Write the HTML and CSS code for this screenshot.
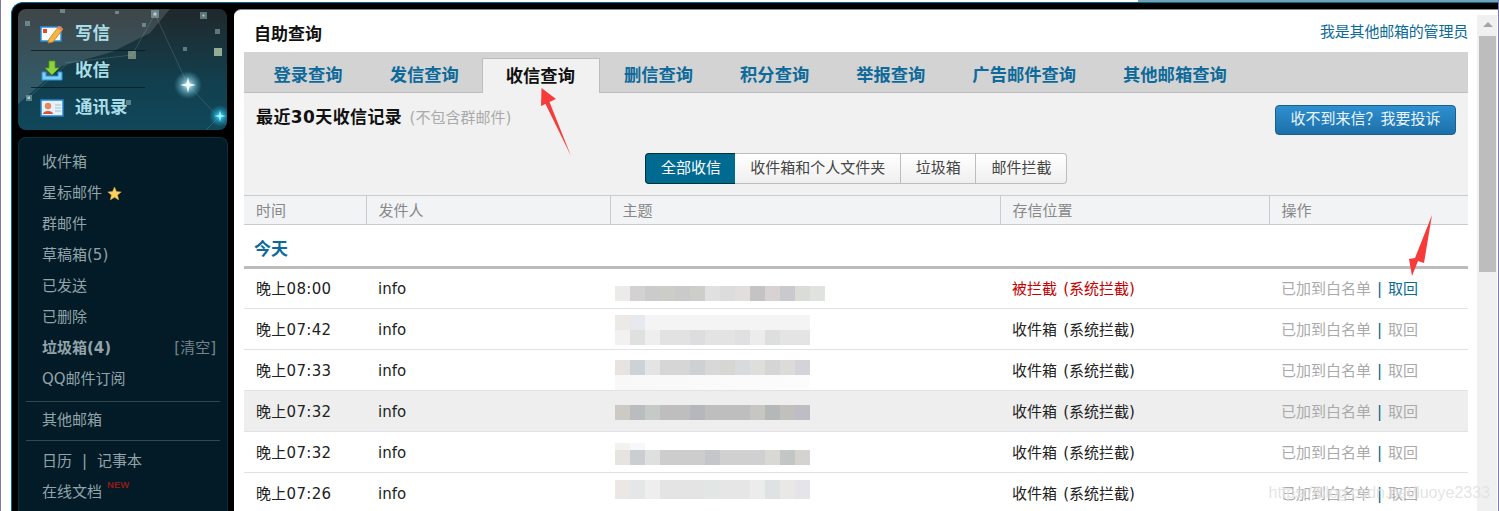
FILE: index.html
```html
<!DOCTYPE html>
<html lang="zh-CN">
<head>
<meta charset="utf-8">
<title>自助查询</title>
<link rel="stylesheet" href="styles.css">
</head>
<body>
<div class="topstrip"></div>
<div class="shell">
  <aside class="sidebar">
    <div class="compose">
      <svg class="sky" viewBox="18 9 209 121" aria-hidden="true">
        <defs>
          <radialGradient id="glowA"><stop offset="0" stop-color="#e8fbff"/><stop offset=".4" stop-color="#9fe0ee" stop-opacity=".6"/><stop offset="1" stop-color="#5cc4dc" stop-opacity="0"/></radialGradient>
          <radialGradient id="glowB"><stop offset="0" stop-color="#7ff0ff"/><stop offset=".35" stop-color="#27c4ea" stop-opacity=".7"/><stop offset="1" stop-color="#1a9cc4" stop-opacity="0"/></radialGradient>
          <filter id="soft"><feGaussianBlur stdDeviation=".6"/></filter>
        </defs>
        <polygon points="18,9 170,9 150,33 112,52 62,66 18,104" fill="#fff" opacity=".14"/>
        <g stroke="#9fd0da" stroke-width=".6" opacity=".32" fill="none">
          <path d="M155 14 L132 55 L65 63"/>
          <path d="M155 14 L188 85 L226 125"/>
          <path d="M66 65 L29 97"/>
          <path d="M220 116 L205 131"/>
        </g>
        <g fill="#9cc2c8" opacity=".5" filter="url(#soft)">
          <rect x="151" y="10" width="8" height="8"/>
          <rect x="200" y="12" width="7" height="7"/>
          <rect x="215" y="29" width="5" height="5"/>
          <rect x="115" y="11" width="4" height="3"/>
          <rect x="60" y="9" width="5" height="4"/>
          <rect x="25" y="21" width="5" height="5"/>
          <rect x="142" y="23" width="4" height="4"/>
          <rect x="183" y="47" width="4" height="4"/>
          <rect x="26" y="95" width="6" height="6"/>
          <rect x="126" y="100" width="5" height="5"/>
        </g>
        <g fill="#cfe6e8" opacity=".75">
          <rect x="153.5" y="12.5" width="3" height="3"/>
          <rect x="202.5" y="14.5" width="2" height="2"/>
          <rect x="27.5" y="96.5" width="2.5" height="2.5"/>
        </g>
        <rect x="128" y="51" width="8" height="8" fill="#b4c8a6" opacity=".55" filter="url(#soft)"/>
        <rect x="214" y="48" width="8" height="8" fill="#c6e0b8" opacity=".7" filter="url(#soft)"/>
        <circle cx="188" cy="85" r="14" fill="url(#glowA)"/>
        <path d="M188 77 L189.5 83.5 L196 85 L189.5 86.5 L188 93 L186.5 86.5 L180 85 L186.5 83.5Z" fill="#f1feff"/>
        <circle cx="220" cy="116" r="11" fill="url(#glowB)"/>
        <path d="M220 110 L221 115 L226 116 L221 117 L220 122 L219 117 L214 116 L219 115Z" fill="#a8f6ff"/>
        <path d="M31 50.5H145M31 87.5H145" stroke="#0a1a20" stroke-width="1" opacity=".8"/>
      </svg>
      <a class="compose-item">
        <svg class="nav-icon" viewBox="0 0 24 20" aria-hidden="true">
          <rect x="1" y="3" width="20" height="14" fill="#fff" stroke="#2b8fd6" stroke-width="1.5"/>
          <rect x="3" y="5" width="4" height="4" fill="#e8452c"/>
          <path d="M9 15 L19 2 L23 5 L13 18 L8 19 Z" fill="#f4b640" stroke="#c9762a" stroke-width=".8"/>
          <path d="M19 2 L23 5 L21.5 7 L17.5 4 Z" fill="#ef7f62"/>
        </svg>
        <span>写信</span>
      </a>
      <a class="compose-item">
        <svg class="nav-icon" viewBox="0 0 24 22" aria-hidden="true">
          <path d="M2 12V20H22V12H18V16H6V12Z" fill="#7fd0f4" stroke="#2593dc" stroke-width="1"/>
          <path d="M9 1H15V8H19L12 15L5 8H9Z" fill="#8ed23a" stroke="#4f9a1c" stroke-width=".8"/>
        </svg>
        <span>收信</span>
      </a>
      <a class="compose-item">
        <svg class="nav-icon" viewBox="0 0 24 18" aria-hidden="true">
          <rect x="1" y="1" width="22" height="16" fill="#e6f2fb" stroke="#2583d6" stroke-width="1.5"/>
          <circle cx="8" cy="7" r="3.2" fill="#e9875a"/>
          <path d="M3 15C3 11 13 11 13 15Z" fill="#d8553c"/>
          <path d="M15 6H21M15 9H21M15 12H21" stroke="#9fc0dc" stroke-width="1"/>
        </svg>
        <span>通讯录</span>
      </a>
    </div>
    <nav class="folders">
      <a class="folder">收件箱</a>
      <a class="folder">星标邮件
        <svg class="star" viewBox="0 0 16 16" aria-hidden="true"><path d="M8 1L10.1 5.8L15.2 6.3L11.3 9.7L12.5 14.8L8 12.1L3.5 14.8L4.7 9.7L.8 6.3L5.9 5.8Z" fill="#fbcf60" stroke="#d9a23a" stroke-width=".5"/></svg>
      </a>
      <a class="folder">群邮件</a>
      <a class="folder">草稿箱(5)</a>
      <a class="folder">已发送</a>
      <a class="folder">已删除</a>
      <a class="folder folder-split"><b>垃圾箱(4)</b><span class="clear">[清空]</span></a>
      <a class="folder">QQ邮件订阅</a>
      <hr class="rule rule-a">
      <a class="folder">其他邮箱</a>
      <hr class="rule rule-b">
      <div class="folder">日历<span class="pipe">|</span>记事本</div>
      <a class="folder">在线文档<sup class="new">NEW</sup></a>
    </nav>
  </aside>

  <main class="main">
    <div class="content">
      <header class="page-head">
        <h1>自助查询</h1>
        <a class="link">我是其他邮箱的管理员</a>
      </header>
      <div class="tabs">
        <a class="tab">登录查询</a>
        <a class="tab">发信查询</a>
        <a class="tab active">收信查询</a>
        <a class="tab">删信查询</a>
        <a class="tab">积分查询</a>
        <a class="tab">举报查询</a>
        <a class="tab">广告邮件查询</a>
        <a class="tab">其他邮箱查询</a>
      </div>
      <section class="panel">
        <div class="panel-top">
          <h2>最近30天收信记录 <small>(不包含群邮件)</small></h2>
          <button class="complain">收不到来信？我要投诉</button>
        </div>
        <div class="segments">
          <a class="seg on">全部收信</a>
          <a class="seg">收件箱和个人文件夹</a>
          <a class="seg">垃圾箱</a>
          <a class="seg">邮件拦截</a>
        </div>
      </section>
      <table class="records">
        <colgroup><col class="c1"><col class="c2"><col class="c3"><col class="c4"><col class="c5"></colgroup>
        <thead>
          <tr><th>时间</th><th>发件人</th><th>主题</th><th>存信位置</th><th>操作</th></tr>
        </thead>
        <tbody>
          <tr class="day"><td colspan="5">今天</td></tr>
          <tr><td class="time">晚上08:00</td><td>info</td><td class="subj"><div class="blur b1"></div></td><td class="red">被拦截 (系统拦截)</td><td class="ops">已加到白名单<span class="sep">|</span><a class="live">取回</a></td></tr>
          <tr><td class="time">晚上07:42</td><td>info</td><td class="subj"><div class="blur b2"></div></td><td>收件箱 (系统拦截)</td><td class="ops">已加到白名单<span class="sep">|</span>取回</td></tr>
          <tr><td class="time">晚上07:33</td><td>info</td><td class="subj"><div class="blur b3"></div></td><td>收件箱 (系统拦截)</td><td class="ops">已加到白名单<span class="sep">|</span>取回</td></tr>
          <tr class="hover"><td class="time">晚上07:32</td><td>info</td><td class="subj"><div class="blur b4"></div></td><td>收件箱 (系统拦截)</td><td class="ops">已加到白名单<span class="sep">|</span>取回</td></tr>
          <tr><td class="time">晚上07:32</td><td>info</td><td class="subj"><div class="blur b5"></div></td><td>收件箱 (系统拦截)</td><td class="ops">已加到白名单<span class="sep">|</span>取回</td></tr>
          <tr><td class="time">晚上07:26</td><td>info</td><td class="subj"><div class="blur b6"></div></td><td>收件箱 (系统拦截)</td><td class="ops">已加到白名单<span class="sep">|</span>取回</td></tr>
        </tbody>
      </table>
    </div>
    <div class="scrollbar">
      <div class="scroll-up"></div>
      <div class="scroll-thumb"></div>
    </div>
  </main>
</div>
<svg class="arrows" viewBox="0 0 1499 511" aria-hidden="true">
  <polygon points="541.5,88 556,99 549.5,102 571,156 545.5,104 541,106" fill="#f73b3b"/>
  <polygon points="1432,215 1424,263 1418,261 1412,276 1409,259 1415,258" fill="#f73b3b"/>
</svg>
<div class="watermark">https://blog.csdn.net/luoye2333</div>
</body>
</html>
```
FILE: styles.css
```css
* { box-sizing: border-box; }
html, body { margin: 0; height: 511px; overflow: hidden; }
body {
  position: relative;
  display: flex;
  flex-direction: column;
  background: #fff;
  border-left: 1px solid #7f78b5;
  border-right: 1px solid #7f78b5;
  font: 15px/1.3 "DejaVu Sans", "Noto Sans CJK SC", sans-serif;
  color: #222;
}
a { text-decoration: none; }

.topstrip {
  height: 2px;
  flex: none;
  background: linear-gradient(90deg, #fff 0 1137px, #6fa3b8 0);
}
.shell {
  flex: 1;
  min-height: 0;
  display: flex;
  margin-left: 10px;
  padding-top: 6px;
  background: #000;
  border-top: 1px solid #04688c;
  border-left: 1px solid #04688c;
  border-top-left-radius: 12px;
}

/* sidebar */
.sidebar {
  flex: none;
  width: 222px;
  padding-left: 6px;
  display: flex;
  flex-direction: column;
  gap: 7px;
}
.compose {
  position: relative;
  flex: none;
  width: 209px;
  height: 121px;
  padding-top: 6px;
  border-radius: 8px;
  overflow: hidden;
  background: linear-gradient(180deg, #20282b 0%, #123f4e 60%, #10475a 100%);
}
.sky { position: absolute; left: 0; top: 0; width: 209px; height: 121px; }
.compose-item {
  position: relative;
  display: flex;
  align-items: center;
  height: 37px;
  padding-left: 22px;
  color: #a9dde8;
  font-size: 17.5px;
  font-weight: 700;
}
.nav-icon { width: 24px; height: 22px; margin-right: 11px; }
.folders {
  flex: 1;
  width: 210px;
  padding: 9px 7px 0;
  border: 1px solid #06303f;
  border-bottom: 0;
  border-radius: 8px 8px 0 0;
  background: #021b26;
  color: #93a3aa;
}
.folder {
  display: flex;
  align-items: center;
  height: 31px;
  padding-left: 16px;
  color: #93a3aa;
}
.folder-split { justify-content: space-between; }
.clear { color: #74848b; padding-right: 4px; }
.star { width: 15px; height: 15px; margin-left: 5px; }
.pipe { margin: 0 10px; }
.new { align-self: flex-start; margin: 3px 0 0 5px; color: #8e1a1a; font: 700 9.5px/1 "Liberation Sans", sans-serif; }
.rule { height: 1px; margin: 0; border: 0; background: #33474f; }
.rule-a { margin: 6px 0 3px; }
.rule-b { margin: 4px 0 5px; }

/* main */
.main {
  flex: 1;
  min-width: 0;
  display: flex;
  padding: 0 1px 0 10px;
  background: #fff;
  border-top: 1px solid #8a8a8a;
  border-top-left-radius: 7px;
  overflow: hidden;
}
.content { width: 1224px; flex: none; }
.page-head {
  height: 42px;
  display: flex;
  justify-content: space-between;
  padding: 13px 0 0 10px;
}
h1 { margin: 0; font-size: 17px; line-height: 22px; font-weight: 700; color: #111; }
.link { color: #0b6a98; font-size: 15px; line-height: 18px; letter-spacing: -.2px; }

.tabs {
  height: 41px;
  display: flex;
  padding: 6px 0 0 6px;
  background: #d3d3d3;
  border-bottom: 1px solid #bdbdbd;
}
.tab {
  height: 35px;
  padding: 0 22.5px;
  border: 1px solid transparent;
  border-bottom: 0;
  color: #0d6a9a;
  font-size: 17.3px;
  font-weight: 700;
  line-height: 33px;
}
.tab.active {
  padding-right: 24.5px;
  color: #111;
  background: #f1f1f1;
  border-color: #bdbdbd;
  line-height: 34px;
}
.panel { height: 102px; padding: 12px 12px 0; background: #f1f1f1; }
.panel-top { display: flex; justify-content: space-between; height: 48px; }
h2 { margin: 0; font-size: 17px; line-height: 24px; font-weight: 700; color: #111; letter-spacing: .4px; }
h2 small { font-size: 15px; font-weight: 400; color: #aaa; margin-left: 1px; letter-spacing: 0; }
.complain {
  width: 181px;
  height: 30px;
  padding: 0;
  border: 1px solid #17608f;
  border-radius: 4px;
  background: linear-gradient(180deg, #2f8fcf, #1c70aa);
  color: #eaf5fb;
  font: inherit;
}
.segments { display: flex; justify-content: center; }
.seg {
  height: 31px;
  padding: 0 14.5px 0 15.17px;
  border: 1px solid #bdbdbd;
  border-left: 0;
  background: linear-gradient(180deg, #fff, #efefef);
  color: #444;
  line-height: 29px;
}
.seg:last-child { border-radius: 0 4px 4px 0; }
.seg.on {
  padding: 0 14px 0 15px;
  border: 1px solid #033;
  border-right: 0;
  border-radius: 4px 0 0 4px;
  background: #006a91;
  color: #fff;
}

/* table */
.records { width: 1224px; table-layout: fixed; border-collapse: collapse; word-spacing: 1.5px; }
.c1 { width: 122px; }
.c2 { width: 244px; }
.c3 { width: 390px; }
.c4 { width: 269px; }
.c5 { width: 199px; }
th {
  height: 29px;
  padding: 3px 0 0 12px;
  text-align: left;
  font-weight: 400;
  color: #888;
  background: #f2f3f5;
  border-top: 1px solid #c8ccd0;
  border-bottom: 1px solid #c8ccd0;
}
th + th { border-left: 1px solid #c8ccd0; }
td {
  height: 41px;
  padding: 3px 0 0 12px;
  border-bottom: 1px solid #e2e2e6;
  color: #222;
  white-space: nowrap;
}
.time { letter-spacing: .3px; }
.day td {
  height: 43px;
  color: #0d6a9a;
  font-size: 17px;
  font-weight: 700;
  padding: 7px 0 0 10px;
  border-bottom: 3px solid #bcbcbc;
}
.hover td { background: #eee; }
.red { color: #c40000; }
td.ops { color: #aaa; }
.sep { margin: 0 6px; color: #0b5f88; }
.live { color: #0b6a98; }

td.subj { padding: 0 0 0 5px; vertical-align: top; }
.blur { height: 15px; width: 195px; background-repeat: no-repeat; }
.b1 {
  width: 210px; margin-top: 17px;
  background-image: linear-gradient(90deg, #ebebea 0 15px, #d3d1d1 0 30px, #cbcbcb 0 45px, #cdcdc8 0 60px, #cacaca 0 75px, #cdcdca 0 90px, #e0e0e0 0 105px, #dcdcdc 0 120px, #e2dede 0 135px, #c4c4c4 0 150px, #d8d2d2 0 165px, #cacace 0 180px, #dadcd8 0 195px, #e0e2e0 0);
}
.b2 {
  height: 30px; margin-top: 6px;
  background-image: linear-gradient(90deg, #ede9e6 0 15px, #e8e9ee 0 30px, #f4f4f4 0),
    linear-gradient(90deg, #f2f0f0 0 15px, #dfe1df 0 30px, #eeeeee 0 45px, #e2e2e2 0 75px, #dddddf 0 90px, #e3e3e3 0 120px, #e0e0e2 0 135px, #ececec 0 150px, #dcdfdd 0 165px, #e4e4e4 0);
  background-size: 100% 15px, 100% 15px;
  background-position: top, bottom;
}
.b3 {
  height: 30px; margin-top: 10px;
  background-image: linear-gradient(90deg, #e6e3e0 0 15px, #cdd2d6 0 30px, #e4e4e4 0 45px, #d6d6d6 0 75px, #cfd0d3 0 90px, #d8d8d8 0 105px, #d6d6d3 0 120px, #d9dadd 0 135px, #dededc 0 150px, #d3d6d5 0 165px, #dddbd8 0 180px, #d4d3d9 0),
    linear-gradient(90deg, #f8f8f8, #fcfcfc);
  background-size: 100% 15px, 100% 15px;
  background-position: top, bottom;
}
.b4 {
  margin-top: 14px;
  background-image: linear-gradient(90deg, #cdc9c5 0 15px, #bbbcbe 0 30px, #c6cac7 0 45px, #bebebe 0 75px, #b6b7ba 0 90px, #bebebe 0 135px, #c8c6c2 0 150px, #b4b8b6 0 165px, #c2c0bc 0 180px, #bebdc3 0);
}
.b5 {
  height: 22px; margin-top: 11px;
  background-image: linear-gradient(90deg, #f4f2ef 0 15px, #f8f8fb 0 30px, #fff 0),
    linear-gradient(90deg, #e6e3e1 0 15px, #cbced0 0 30px, #dde0de 0 45px, #cdcdcd 0 90px, #c4c7c9 0 105px, #d0d0d0 0 150px, #d9d8d4 0 165px, #c2c6c5 0 180px, #d5d3d0 0 195px, #cfced4 0);
  background-size: 100% 7px, 100% 15px;
  background-position: top, bottom;
}
.b6 {
  height: 19px; margin-top: 7px;
  background-image: linear-gradient(90deg, #ebe7e4 0 15px, #e4e6e8 0 30px, #eeeeee 0 45px, #e4e4e4 0 90px, #e2e6e5 0 105px, #e6e6e6 0 135px, #ececec 0 150px, #dfe2e2 0 165px, #e9e8e6 0 180px, #e4e4e9 0);
}

/* scrollbar */
.scrollbar {
  flex: none;
  width: 20px;
  margin: 5px 0 0 9px;
  padding: 0 1px 0 2px;
  background: #f0f0f0;
}
.scroll-up {
  width: 0;
  height: 12px;
  margin: 0 auto;
  border: 5px solid transparent;
  border-top-width: 7px;
  border-bottom-color: #a5a5a5;
}
.scroll-thumb { height: 236px; margin-top: 9px; background: #bdbdbd; }

/* overlays */
.arrows { position: absolute; left: -1px; top: 0; width: 1499px; height: 511px; pointer-events: none; }
.watermark {
  position: absolute;
  right: 8px;
  top: 482px;
  color: rgba(205, 205, 205, .55);
  font: 16px/22px "Liberation Sans", sans-serif;
  text-shadow: 0 0 1px rgba(255, 255, 255, .8);
}
```
